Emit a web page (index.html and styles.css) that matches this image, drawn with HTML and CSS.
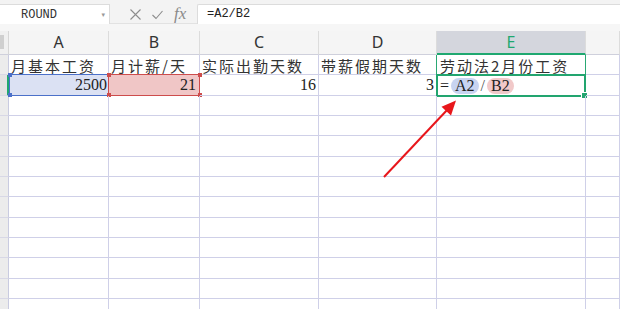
FILE: index.html
```html
<!DOCTYPE html>
<html>
<head>
<meta charset="utf-8">
<link rel="stylesheet" href="styles.css">
</head>
<body>
<div class="app">
  <div class="toolbar">
    <div class="namebox"><span class="name">ROUND</span><span class="caret">&#9662;</span></div>
    <div class="icons">
      <svg width="13" height="13" viewBox="0 0 13 13"><path d="M1.5 1.5 L11.5 11.5 M11.5 1.5 L1.5 11.5" stroke="#8c8c8c" stroke-width="1.1" fill="none"/></svg>
      <svg width="13" height="13" viewBox="0 0 13 13"><path d="M1.5 7 L5 10.5 L11.5 3" stroke="#8c8c8c" stroke-width="1.1" fill="none"/></svg>
      <span class="fx">fx</span>
    </div>
    <div class="formula">=A2/B2</div>
  </div>
  <div class="strip"></div>
  <div class="sheet">
    <div class="corner"><span class="tri"></span></div>
    <div class="colhead"><span>A</span></div>
    <div class="colhead"><span>B</span></div>
    <div class="colhead"><span>C</span></div>
    <div class="colhead"><span>D</span></div>
    <div class="colhead active"><span>E</span></div>
    <div class="colhead"></div>

    <div class="rowhead"></div>
    <div class="cell txt">月基本工资</div>
    <div class="cell txt">月计薪/天</div>
    <div class="cell txt">实际出勤天数</div>
    <div class="cell txt">带薪假期天数</div>
    <div class="cell txt e1">劳动法2月份工资</div>
    <div class="cell"></div>

    <div class="rowhead sel"></div>
    <div class="cell num refa">2500<span class="h tl"></span><span class="h bl"></span></div>
    <div class="cell num refb">21<span class="h tl"></span><span class="h tr"></span><span class="h bl"></span><span class="h br"></span></div>
    <div class="cell num">16</div>
    <div class="cell num">3</div>
    <div class="cell edit"><span class="eq">=</span><span class="pill pa">A2</span><span class="slash">/</span><span class="pill pb">B2</span><span class="fill"></span></div>
    <div class="cell"></div>

    <div class="rowhead"></div><div class="cell"></div><div class="cell"></div><div class="cell"></div><div class="cell"></div><div class="cell"></div><div class="cell"></div>
    <div class="rowhead"></div><div class="cell"></div><div class="cell"></div><div class="cell"></div><div class="cell"></div><div class="cell"></div><div class="cell"></div>
    <div class="rowhead"></div><div class="cell"></div><div class="cell"></div><div class="cell"></div><div class="cell"></div><div class="cell"></div><div class="cell"></div>
    <div class="rowhead"></div><div class="cell"></div><div class="cell"></div><div class="cell"></div><div class="cell"></div><div class="cell"></div><div class="cell"></div>
    <div class="rowhead"></div><div class="cell"></div><div class="cell"></div><div class="cell"></div><div class="cell"></div><div class="cell"></div><div class="cell"></div>
    <div class="rowhead"></div><div class="cell"></div><div class="cell"></div><div class="cell"></div><div class="cell"></div><div class="cell"></div><div class="cell"></div>
    <div class="rowhead"></div><div class="cell"></div><div class="cell"></div><div class="cell"></div><div class="cell"></div><div class="cell"></div><div class="cell"></div>
    <div class="rowhead"></div><div class="cell"></div><div class="cell"></div><div class="cell"></div><div class="cell"></div><div class="cell"></div><div class="cell"></div>
    <div class="rowhead"></div><div class="cell"></div><div class="cell"></div><div class="cell"></div><div class="cell"></div><div class="cell"></div><div class="cell"></div>
    <div class="rowhead"></div><div class="cell"></div><div class="cell"></div><div class="cell"></div><div class="cell"></div><div class="cell"></div><div class="cell"></div>
    <div class="rowhead"></div><div class="cell"></div><div class="cell"></div><div class="cell"></div><div class="cell"></div><div class="cell"></div><div class="cell"></div>
  </div>
  <svg class="arrow" width="620" height="309" viewBox="0 0 620 309">
    <line x1="384" y1="177" x2="448" y2="109" stroke="#e8161b" stroke-width="2"/>
    <polygon points="456,100.5 451,115.5 441.5,106.8" fill="#e8161b"/>
  </svg>
</div>
</body>
</html>
```

FILE: styles.css
```css
html, body {
  margin: 0;
  padding: 0;
  background: #ffffff;
}
.app {
  position: relative;
  width: 620px;
  height: 309px;
  overflow: hidden;
  font-family: "Liberation Serif", "Noto Sans CJK SC", serif;
}
.toolbar {
  display: flex;
  align-items: flex-start;
  height: 24px;
  padding-top: 4px;
  box-sizing: border-box;
  background: #f3f3f3;
  border-bottom: 1px solid #e2e2e2;
}
.namebox {
  width: 110px;
  height: 20px;
  box-sizing: border-box;
  background: #fff;
  border: 1px solid #dcdcdc;
  border-left: none;
  border-bottom: none;
  display: flex;
  align-items: center;
  justify-content: space-between;
  padding: 0 4px 0 21px;
  font-family: "Liberation Mono", monospace;
  font-size: 12px;
  color: #333;
}
.caret {
  font-size: 7px;
  color: #999;
  font-family: "DejaVu Sans", sans-serif;
}
.icons {
  width: 87px;
  height: 20px;
  display: flex;
  align-items: center;
  padding-left: 19px;
  gap: 9px;
  box-sizing: border-box;
}
.fx {
  font-family: "Liberation Serif", serif;
  font-style: italic;
  font-size: 17px;
  color: #8a8a8a;
  margin-left: 1px;
  line-height: 16px;
}
.formula {
  flex: 1;
  height: 20px;
  box-sizing: border-box;
  background: #fff;
  border: 1px solid #dcdcdc;
  border-right: none;
  border-bottom: none;
  border-radius: 2px 0 0 0;
  padding-left: 9px;
  font-family: "Liberation Mono", monospace;
  font-size: 12px;
  line-height: 18px;
  color: #222;
}
.strip {
  height: 7px;
  background: #f6f6f6;
}
.sheet {
  display: grid;
  grid-template-columns: 9px 100px 91px 119px 118px 149px 34px;
  grid-template-rows: 24px repeat(13, 20.33px);
}
.corner {
  background: #f0f0f0;
  border-right: 1px solid #d6d6d6;
  border-bottom: 1px solid #cfd0dc;
  position: relative;
}
.tri {
  position: absolute;
  left: 0;
  top: 4px;
  width: 4px;
  height: 14px;
  background: #cfcfcf;
}
.colhead {
  background: #f5f5f5;
  border-right: 1px solid #dcdcdc;
  border-bottom: 1px solid #cfd0dc;
  display: flex;
  align-items: flex-start;
  justify-content: center;
  font-family: "Noto Sans", sans-serif;
  font-size: 16px;
  line-height: 17px;
  color: #333;
  padding-top: 3px;
  box-sizing: border-box;
  overflow: hidden;
}
.colhead.active {
  background: #d4d6dd;
  color: #1fa870;
  border-bottom: 2px solid #1fa870;
}
.rowhead {
  background: #ececec;
  border-right: 1px solid #c9cbe0;
  border-bottom: 1px solid #d8d8e6;
  box-sizing: border-box;
}
.rowhead.sel {
  border-right: 2px solid #1fa870;
  background: #e3e3e3;
}
.cell {
  border-right: 1px solid #cfd0e8;
  border-bottom: 1px solid #cfd0e8;
  box-sizing: border-box;
  position: relative;
  white-space: nowrap;
  color: #333;
}
.txt {
  font-family: "Noto Sans CJK SC", sans-serif;
  font-size: 15px;
  line-height: 19px;
  padding-top: 1px;
  padding-left: 2px;
  letter-spacing: 2px;
}
.e1 {
  border-left: 1px solid #2aa874;
  border-right: 1px solid #2aa874;
  margin-left: -1px;
  padding-left: 3px;
}
.num {
  font-size: 16px;
  text-align: right;
  padding-right: 2px;
  line-height: 20px;
  color: #222;
}
.refa {
  background: #dbe1f3;
  border: 1px solid #4b70c9;
  border-width: 1px 0 1px 1px;
  margin-top: -1px;
  height: calc(100% + 1px);
}
.refb {
  background: #f0c6c6;
  border: 1px solid #cd4c4c;
  margin-top: -1px;
  margin-left: -1px;
  height: calc(100% + 1px);
  padding-right: 3px;
}
.h {
  position: absolute;
  width: 4px;
  height: 4px;
}
.refa .h { background: #4b70c9; }
.refb .h { background: #cd4c4c; }
.tl { left: -2px; top: -2px; }
.tr { right: -3px; top: -2px; }
.bl { left: -2px; bottom: -2px; }
.br { right: -3px; bottom: -2px; }
.edit {
  border: 2px solid #22a56f;
  margin-top: -1px;
  margin-left: -1px;
  height: calc(100% + 2px);
  display: flex;
  align-items: center;
  padding-left: 2px;
  padding-top: 1px;
  font-size: 16px;
  color: #222;
}
.eq {
  margin-right: 2px;
}
.pill {
  padding: 0 4px;
  border-radius: 8px;
  line-height: 16px;
}
.pa { background: #c8d4f1; }
.pb { background: #f1c9c9; }
.slash {
  margin: 0 2px;
  color: #555;
}
.fill {
  position: absolute;
  right: -4px;
  bottom: -4px;
  width: 5px;
  height: 5px;
  background: #22a56f;
  border: 1px solid #fff;
}
.arrow {
  position: absolute;
  left: 0;
  top: 0;
  pointer-events: none;
}
```
